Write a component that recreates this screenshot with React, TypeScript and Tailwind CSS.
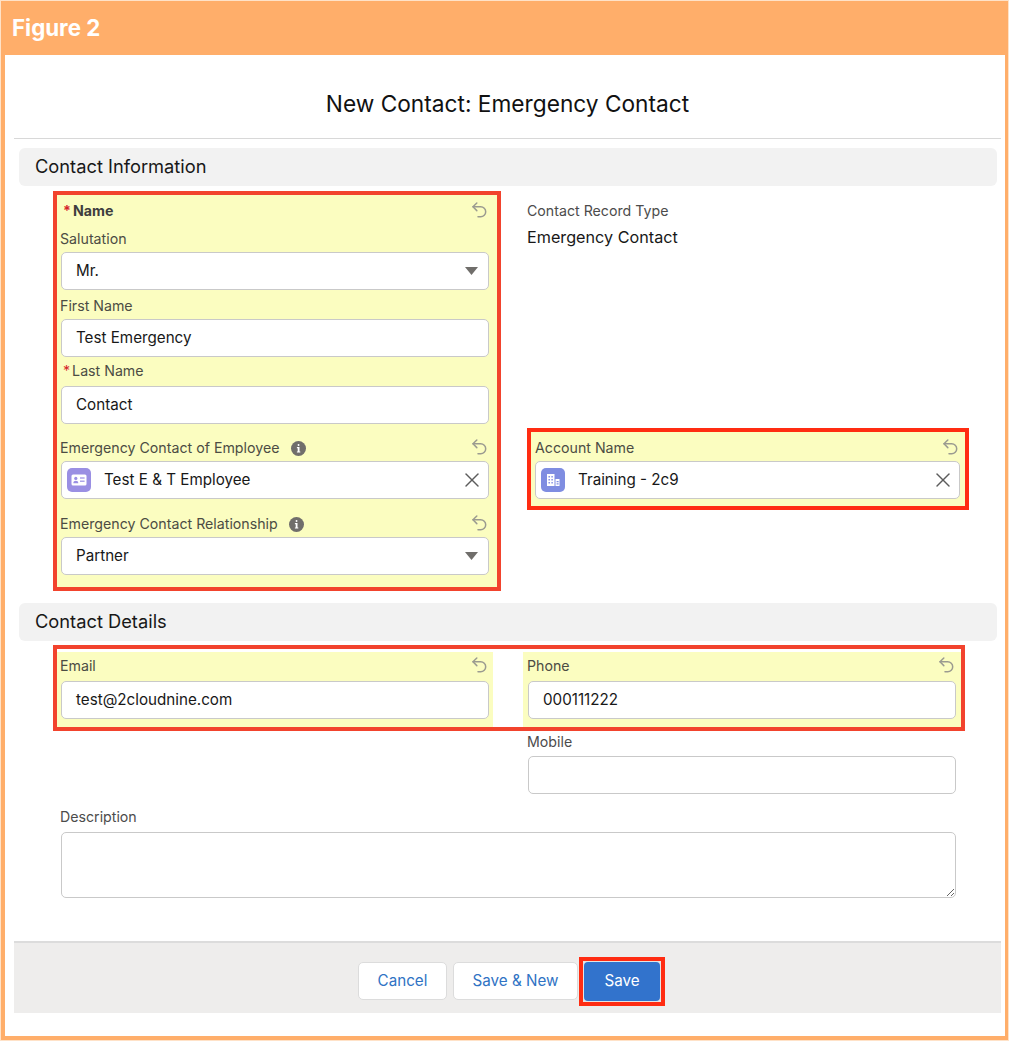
import React from "react";
import { X } from "lucide-react";

const font = "font-['Inter','Liberation_Sans',sans-serif]";

function Undo() {
  return (
    <svg width="15" height="16" viewBox="0 0 15 16" fill="none" stroke="#9b9b90" strokeWidth="1.5" strokeLinecap="round" strokeLinejoin="round" className="mb-[2px] mr-[1px] shrink-0">
      <path d="M4.8 1 1 4.8l3.8 3.8" />
      <path d="M1 4.8h7.7a5 5 0 0 1 0 10H6" />
    </svg>
  );
}

function Info() {
  return (
    <svg width="15" height="15" viewBox="0 0 15 15" className="shrink-0">
      <circle cx="7.5" cy="7.5" r="7.5" fill="#706e6b" />
      <rect x="6.6" y="3" width="1.9" height="1.9" rx="0.9" fill="#fff" />
      <path d="M5.9 6.1h2.6v4.3h0.8v1.1H5.9v-1.1h0.8V7.2h-0.8z" fill="#fff" />
    </svg>
  );
}

function Caret() {
  return (
    <svg width="13" height="8" viewBox="0 0 13 8" className="shrink-0">
      <path d="M0 0h13L6.5 8z" fill="#706e6b" />
    </svg>
  );
}

function Label({ children, undo, info }: { children: React.ReactNode; undo?: boolean; info?: number }) {
  return (
    <div className="-ml-px flex h-5 items-center justify-between pr-[1px] text-[14.2px] text-[#4c4c44]">
      <span className="flex items-center">
        {children}
        {info ? <span className={info === 1 ? "ml-[12px]" : "ml-[11px]"}><Info /></span> : null}
      </span>
      {undo ? <Undo /> : null}
    </div>
  );
}

function Box({ children, className = "" }: { children: React.ReactNode; className?: string }) {
  return (
    <div className={`flex h-[38px] items-center rounded-[5px] border border-[#c9c9c9] bg-white text-[15.2px] text-[#181818] ${className}`}>
      {children}
    </div>
  );
}

function TextBox({ value, caret }: { value?: string; caret?: boolean }) {
  return (
    <Box className="justify-between pl-[14px] pr-[10px]">
      <span>{value}</span>
      {caret ? <Caret /> : null}
    </Box>
  );
}

function Lookup({ value, kind }: { value: string; kind: "contact" | "account" }) {
  return (
    <Box className="justify-between pl-[5px] pr-[4px]">
      <span className="flex items-center">
        <span className={`flex h-6 w-6 items-center justify-center rounded-[5px] ${kind === "contact" ? "bg-[#9a8fe3]" : "bg-[#7f8de1]"}`}>
          {kind === "contact" ? (
            <svg width="16" height="12" viewBox="0 0 16 12">
              <rect x="0.5" y="0.5" width="15" height="11" rx="1.5" fill="#fff" />
              <circle cx="4.8" cy="4.4" r="1.6" fill="#9a8fe3" />
              <path d="M2.3 9.2c0-1.6 1.2-2.4 2.5-2.4s2.5.8 2.5 2.4z" fill="#9a8fe3" />
              <rect x="9" y="3.4" width="4.6" height="1.2" fill="#9a8fe3" />
              <rect x="9" y="6.6" width="4.6" height="1.2" fill="#9a8fe3" />
            </svg>
          ) : (
            <svg width="16" height="16" viewBox="0 0 16 16">
              <path d="M2 2h7.5v12H2z" fill="#fff" />
              <path d="M10.5 7H14.5v7h-4z" fill="#fff" />
              <path d="M3.5 4h1.4v1.4H3.5zM6.4 4h1.4v1.4H6.4zM3.5 7h1.4v1.4H3.5zM6.4 7h1.4v1.4H6.4zM3.5 10h1.4v1.4H3.5zM6.4 10h1.4v1.4H6.4zM11.6 9h2v1.2h-2zM11.6 11.2h2v1.2h-2z" fill="#7f8de1" />
            </svg>
          )}
        </span>
        <span className="ml-[13px]">{value}</span>
      </span>
      <X size={24} strokeWidth={1.4} className="text-[#5c5c5c]" />
    </Box>
  );
}

function SectionBar({ title, className = "" }: { title: string; className?: string }) {
  return (
    <div className={`ml-[14px] mr-[8px] flex h-[38px] items-center rounded-[6px] bg-[#f2f2f2] pl-[16px] text-[18.3px] text-[#181818] ${className}`}>
      {title}
    </div>
  );
}

function Star() {
  return <span className="mr-[2px] text-[#d5212a]">*</span>;
}

export default function App() {
  return (
    <div className={`flex h-[1041px] w-[1009px] flex-col border border-[#ffe2c8] bg-[#ffae6a] ${font}`}>
      <div className="flex h-[54px] shrink-0 items-center pl-[11px] text-[22.3px] font-bold text-white">Figure 2</div>
      <div className="ml-[4px] mr-[3px] h-[981px] shrink-0 bg-white">
        <div className="ml-[9px] mr-[4px] border-b border-[#d8d8d8] pb-[17px] pt-[32px] text-center text-[22.7px] leading-[34px] text-[#111]">
          New Contact: Emergency Contact
        </div>
        <SectionBar title="Contact Information" className="mt-[9px]" />
        <div className="mt-[5px] flex">
          <div className="ml-[48px] h-[400px] w-[448px] border-4 border-[#f2432d] bg-[#fbfdc0] pl-[4px] pr-[8px] pt-[6px]">
            <div className="flex h-5 items-center justify-between pl-[2px] pr-[1px] text-[14.2px] text-[#3e3e3e]">
              <span className="flex items-center font-bold"><Star />Name</span>
              <Undo />
            </div>
            <div className="mt-[8px]"><Label>Salutation</Label></div>
            <div className="mt-[3px]"><TextBox value="Mr." caret /></div>
            <div className="mt-[6px]"><Label>First Name</Label></div>
            <div className="mt-[3px]"><TextBox value="Test Emergency" /></div>
            <div className="mt-[4px]"><Label><span className="ml-[3px]"><Star /></span>Last Name</Label></div>
            <div className="mt-[5px]"><TextBox value="Contact" /></div>
            <div className="mt-[14px]"><Label undo info={1}>Emergency Contact of Employee</Label></div>
            <div className="mt-[3px]"><Lookup value="Test E &amp; T Employee" kind="contact" /></div>
            <div className="mt-[15px]"><Label undo info={2}>Emergency Contact Relationship</Label></div>
            <div className="mt-[3px]"><TextBox value="Partner" caret /></div>
          </div>
          <div className="ml-[26px] w-[442px]">
            <div className="mt-[10px] flex h-5 items-center text-[14.2px] text-[#4c4c4c]">Contact Record Type</div>
            <div className="mt-[4px] flex h-6 items-center text-[16.2px] text-[#181818]">Emergency Contact</div>
            <div className="mt-[179px] h-[82px] border-4 border-[#ff2c12] bg-[#fbfdc0] pl-[4px] pr-[5px] pt-[6px]">
              <div className="ml-px"><Label undo>Account Name</Label></div>
              <div className="mt-[3px]"><Lookup value="Training - 2c9" kind="account" /></div>
            </div>
          </div>
        </div>
        <SectionBar title="Contact Details" className="mt-[12px]" />
        <div className="ml-[48px] mt-[4px] flex h-[86px] w-[912px] justify-between border-4 border-[#f2432d] pt-[3px]">
          <div className="h-[75px] w-[436px] bg-[#fbfdc0] px-[4px] pt-[4px]">
            <Label undo>Email</Label>
            <div className="mt-[5px]"><TextBox value="test@2cloudnine.com" /></div>
          </div>
          <div className="h-[75px] w-[438px] bg-[#fbfdc0] px-[5px] pt-[4px]">
            <Label undo>Phone</Label>
            <div className="mt-[5px]"><TextBox value="000111222" /></div>
          </div>
        </div>
        <div className="ml-[523px] mr-[49px]">
          <div className="-ml-px mt-[1px] flex h-5 items-center text-[14.2px] text-[#4c4c4c]">Mobile</div>
          <div className="mt-[4px]"><TextBox /></div>
        </div>
        <div className="ml-[56px] mr-[49px]">
          <div className="-ml-px mt-[13px] flex h-5 items-center text-[14.2px] text-[#4c4c4c]">Description</div>
          <textarea className="mt-[5px] block h-[66px] w-full rounded-[5px] border border-[#c9c9c9] bg-white" />
        </div>
        <div className="ml-[9px] mr-[4px] mt-[43px] flex h-[72px] items-center border-t-2 border-[#dcdcdc] bg-[#eeedec] pl-[344px] pt-[6px] text-[15.2px]">
          <div className="flex h-[38px] w-[89px] items-center justify-center rounded-[5px] border border-[#dcdcdc] bg-white text-[#2f73c4]">Cancel</div>
          <div className="ml-[6px] flex h-[38px] w-[125px] items-center justify-center rounded-[5px] border border-[#dcdcdc] bg-white text-[#2f73c4]">Save &amp; New</div>
          <div className="ml-[1px] h-[49px] w-[86px] border-4 border-[#ff2c12] bg-[#e4e4e4] p-px">
            <div className="flex h-full items-center justify-center rounded-[4px] bg-[#3273cc] text-white">Save</div>
          </div>
        </div>
      </div>
    </div>
  );
}
